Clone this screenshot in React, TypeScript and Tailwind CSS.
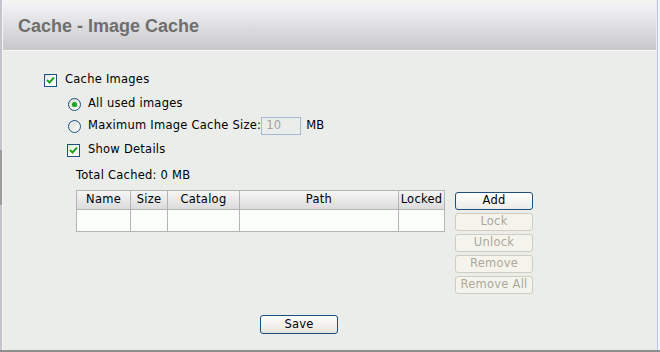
import React from 'react';

const CheckBox: React.FC<{ checked?: boolean }> = ({ checked }) => (
  <span className="w-[13px] h-[13px] shrink-0 border border-[#1c5180] bg-gradient-to-br from-[#dcdcd7] via-white to-white flex items-center justify-center">
    {checked && (
      <svg width="9" height="9" viewBox="0 0 9 9">
        <path d="M1 4 L3.5 6.5 L8 1.5" fill="none" stroke="#21a121" strokeWidth="2" />
      </svg>
    )}
  </span>
);

const Radio: React.FC<{ checked?: boolean }> = ({ checked }) => (
  <span className="w-[13px] h-[13px] shrink-0 rounded-full border border-[#1c5180] bg-gradient-to-br from-[#dcdcd7] to-white flex items-center justify-center">
    {checked && <span className="w-[5px] h-[5px] rounded-full bg-[#21a121] shadow-[0_0_1px_#5ed35e]" />}
  </span>
);

const SideButton: React.FC<{ label: string; enabled?: boolean }> = ({ label, enabled }) => (
  <button
    className={
      enabled
        ? 'w-[78px] h-[18px] rounded-[3px] border border-[#1c4f7c] bg-gradient-to-b from-white to-[#ecebe6] text-black leading-none'
        : 'w-[78px] h-[18px] rounded-[3px] border border-[#cfcdbf] bg-[#f5f4ec] text-[#aca899] leading-none'
    }
  >
    {label}
  </button>
);

export default function App() {
  const cols = [
    { name: 'Name', w: 54 },
    { name: 'Size', w: 37 },
    { name: 'Catalog', w: 72 },
    { name: 'Path', w: 159 },
    { name: 'Locked', w: 46 },
  ];

  return (
    <div className="w-[660px] h-[352px] flex flex-col bg-[#f4f5f3] font-['DejaVu_Sans',sans-serif] text-[11.5px] tracking-[0.25px] text-black">
      <div className="flex h-[350px]">
        {/* left frame edge */}
        <div className="w-[2px] flex flex-col bg-[#c6c3cd]">
          <div className="h-[150px]" />
          <div className="h-[55px] bg-[#9c9c9c]" />
        </div>
        <div className="w-[1px] bg-[#f4f5f3]" />

        <div className="flex-1 flex flex-col">
          <div className="h-[3px] bg-[#f4f5f3]" />
          {/* header */}
          <div className="h-[47px] flex items-center pl-[15px] bg-gradient-to-b from-[#f4f4f6] to-[#c8c8ca]">
            <h1 className="font-['Liberation_Sans',sans-serif] font-bold text-[18px] tracking-normal text-[#6e6e6e]">
              Cache - Image Cache
            </h1>
          </div>
          <div className="h-[1px] bg-[#f7f8f6]" />

          {/* body */}
          <div className="flex-1 bg-[#ebedea] flex flex-col pt-[18px] pl-[41px]">
            <div className="h-[22px] flex items-center gap-[8px]">
              <CheckBox checked />
              <span>Cache Images</span>
            </div>

            <div className="h-[22px] mt-[2px] ml-[24px] flex items-center gap-[7px]">
              <Radio checked />
              <span>All used images</span>
            </div>

            <div className="h-[22px] ml-[24px] flex items-center gap-[7px]">
              <Radio />
              <span>Maximum Image Cache Size:</span>
              <div className="w-[40px] h-[18px] -ml-[7px] border border-[#a7b9d1] bg-[#ebedea] text-[#a3a3a3] flex items-center pl-[4px]">
                10
              </div>
              <span className="ml-[-2px]">MB</span>
            </div>

            <div className="h-[22px] mt-[2px] ml-[23px] flex items-center gap-[8px]">
              <CheckBox checked />
              <span>Show Details</span>
            </div>

            <div className="h-[22px] mt-[4px] ml-[32px] flex items-center">
              <span>Total Cached: 0 MB</span>
            </div>

            <div className="mt-[3px] ml-[32px] flex items-start">
              <table className="table-fixed border-collapse border border-[#b4b4b4] bg-[#fbfdfb]">
                <colgroup>
                  {cols.map(c => (
                    <col key={c.name} style={{ width: c.w }} />
                  ))}
                </colgroup>
                <thead>
                  <tr className="h-[19px] bg-gradient-to-b from-[#f6f6f6] to-[#dadada]">
                    {cols.map(c => (
                      <th key={c.name} className="border border-[#b4b4b4] font-normal text-center px-0 leading-none">
                        {c.name}
                      </th>
                    ))}
                  </tr>
                </thead>
                <tbody>
                  <tr className="h-[22px]">
                    {cols.map(c => (
                      <td key={c.name} className="border border-[#b4b4b4]" />
                    ))}
                  </tr>
                </tbody>
              </table>

              <div className="ml-[10px] mt-[2px] flex flex-col gap-[3px]">
                <SideButton label="Add" enabled />
                <SideButton label="Lock" />
                <SideButton label="Unlock" />
                <SideButton label="Remove" />
                <SideButton label="Remove All" />
              </div>
            </div>

            <div className="mt-[21px] ml-[216px]">
              <button className="w-[78px] h-[19px] rounded-[3px] border border-[#1c4f7c] bg-gradient-to-b from-white to-[#e6e4dc] text-black leading-none">
                Save
              </button>
            </div>
          </div>
        </div>

        {/* right frame edge */}
        <div className="w-[1px] bg-[#ebedea]" />
        <div className="w-[1px] bg-[#b7c4ec]" />
        <div className="w-[2px] bg-[#f4f5f3]" />
      </div>
      <div className="h-[2px] bg-[#8e8e8e]" />
    </div>
  );
}
